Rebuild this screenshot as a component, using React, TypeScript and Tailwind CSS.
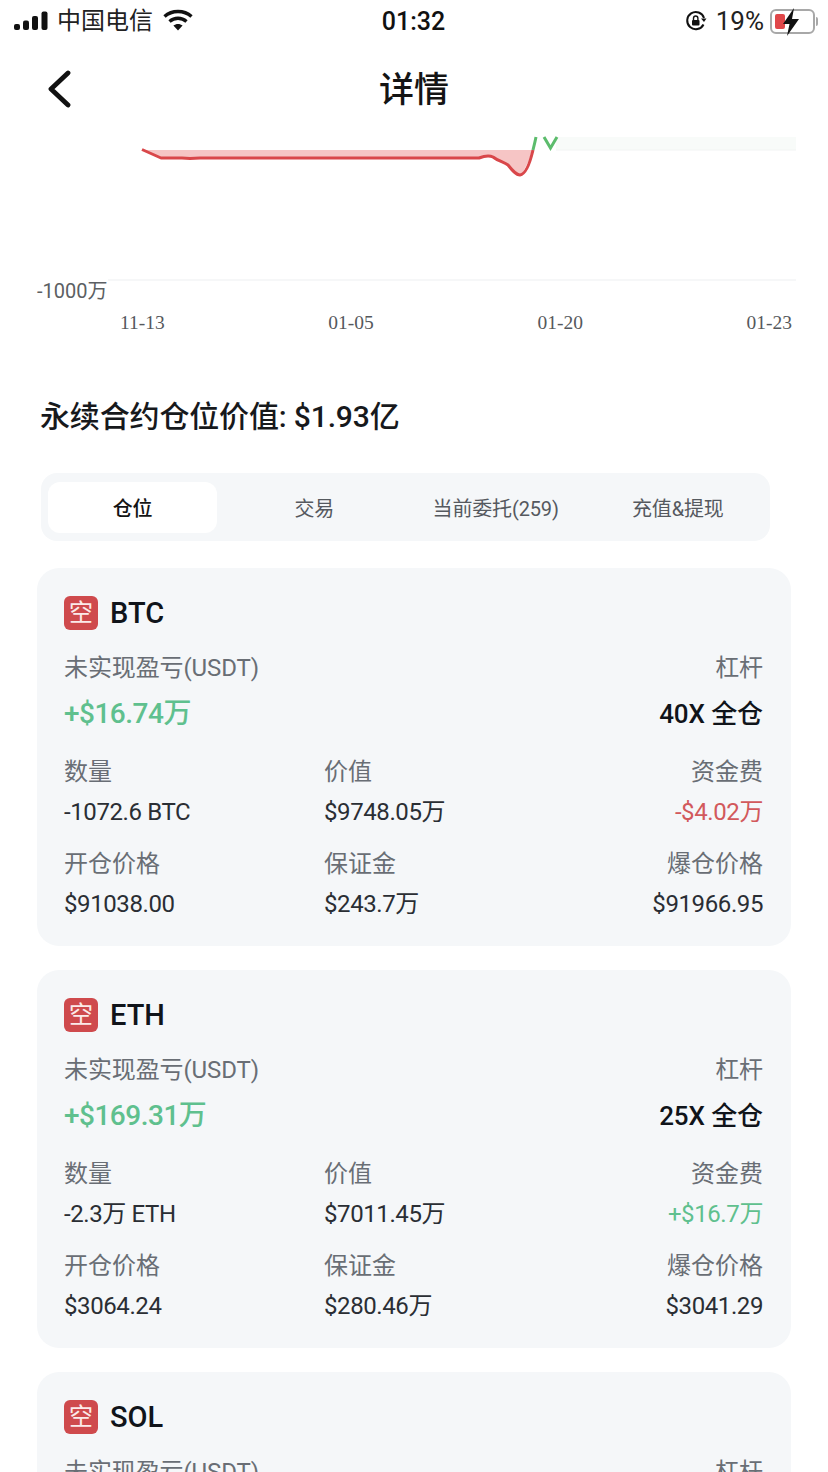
const sans = "font-['Roboto','Noto_Sans_CJK_SC',sans-serif]";

type Cell = { label: string; value: string; tone?: string };
type Position = {
  symbol: string;
  pnl: string;
  leverage: string;
  rows: Cell[][];
};

const positions: Position[] = [
  {
    symbol: 'BTC',
    pnl: '+$16.74万',
    leverage: '40X 全仓',
    rows: [
      [
        { label: '数量', value: '-1072.6 BTC' },
        { label: '价值', value: '$9748.05万' },
        { label: '资金费', value: '-$4.02万', tone: 'text-[#d2595c]' },
      ],
      [
        { label: '开仓价格', value: '$91038.00' },
        { label: '保证金', value: '$243.7万' },
        { label: '爆仓价格', value: '$91966.95' },
      ],
    ],
  },
  {
    symbol: 'ETH',
    pnl: '+$169.31万',
    leverage: '25X 全仓',
    rows: [
      [
        { label: '数量', value: '-2.3万 ETH' },
        { label: '价值', value: '$7011.45万' },
        { label: '资金费', value: '+$16.7万', tone: 'text-[#5fc08e]' },
      ],
      [
        { label: '开仓价格', value: '$3064.24' },
        { label: '保证金', value: '$280.46万' },
        { label: '爆仓价格', value: '$3041.29' },
      ],
    ],
  },
];

function StatusBar() {
  return (
    <div className="flex h-[42px] items-center justify-between pl-[14px] pr-[10px]">
      <div className="flex w-[300px] items-center">
        <svg width="34" height="20" viewBox="0 0 34 20" fill="#111">
          <rect x="0" y="13" width="6" height="6" rx="2" />
          <rect x="9" y="9.5" width="6" height="9.5" rx="2" />
          <rect x="18" y="5" width="6" height="14" rx="2" />
          <rect x="27.5" y="0.5" width="6" height="18.5" rx="2" />
        </svg>
        <span className="ml-[9px] text-[24px] leading-none text-[#222]">中国电信</span>
        <svg className="ml-[10px] -mt-[3px]" width="30" height="22" viewBox="0 0 30 22" fill="none" stroke="#111" strokeWidth="3.4">
          <path d="M1.5 7.5C9 .8 21 .8 28.5 7.5" />
          <path d="M6.5 12.5C11.5 8.2 18.5 8.2 23.5 12.5" />
          <path d="M15 21.5l-4.6-5c2.6-2.1 6.6-2.1 9.2 0z" fill="#111" stroke="none" />
        </svg>
      </div>
      <span className="-ml-[5px] text-[25px] font-medium leading-none text-[#111]">01:32</span>
      <div className="flex w-[300px] items-center justify-end">
        <svg width="22" height="22" viewBox="0 0 22 22" fill="none" stroke="#111" strokeWidth="2">
          <path d="M18.5 14.5A8.6 8.6 0 1 1 19 8" />
          <path d="M16 8.5h5.5L19 12z" fill="#111" stroke="none" />
          <rect x="7" y="10" width="7.5" height="5.5" rx="1" fill="#111" stroke="none" />
          <path d="M8.500 10V8.200a2.200 2.200 0 0 1 4.400 0V10" strokeWidth="1.400" />
        </svg>
        <span className="ml-[9px] text-[26px] leading-none text-[#222]">19%</span>
        <div className="relative ml-[6px] h-[25px] w-[45px] rounded-[6px] border-2 border-[#a8a8a8] p-[3px]">
          <div className="h-full w-[10px] rounded-[2px] bg-[#e0474a]" />
          <svg className="absolute left-[9px] -top-[5px]" width="20" height="32" viewBox="0 0 20 30" fill="#111">
            <path d="M13 1L2 17h6.500L6 29 18 12h-7z" />
          </svg>
        </div>
        <div className="ml-[1px] h-[9px] w-[2px] rounded-r bg-[#a8a8a8]" />
      </div>
    </div>
  );
}

function NavBar() {
  return (
    <div className="relative flex h-[93px] items-center justify-center pt-[3px]">
      <svg className="absolute left-[47px] top-[28px]" width="26" height="38" viewBox="0 0 26 38" fill="none" stroke="#111" strokeWidth="4.800" strokeLinecap="round" strokeLinejoin="round">
        <path d="M21 3L4 19l17 16" />
      </svg>
      <span className="text-[35px] font-medium leading-none text-[#141414]">详情</span>
    </div>
  );
}

function Chart() {
  return (
    <div className="relative h-[148px]">
      <svg className="block" width="828" height="148" viewBox="0 135 828 148" fill="none">
        <rect x="556" y="137" width="240" height="13" fill="#f8fbf9" />
        <path d="M142 150H532L529 160L522 174L517 174L511 167L505 163L498 160L491 156L484 157L479 158H190L182 158H162Z" fill="#f6c5c5" />
        <path d="M142 149.500L161 158H182L190 158.500L200 158H479C484 156 489 155 493 157C498 161 504 162 508 165C512 170 516 175 520 175C526 174 530 163 533 150" stroke="#d9474a" strokeWidth="3" strokeLinejoin="round" />
        <path d="M533 150C534 146 535 142 536 137M544 137L550.500 148L557 137" stroke="#5cbc6c" strokeWidth="3" />
        <path d="M556 150H796" stroke="#f2f4f3" strokeWidth="1" />
        <path d="M108 280H796" stroke="#f6f7f8" strokeWidth="2" />
      </svg>
      <span className={`${sans} absolute left-[37px] top-[146px] text-[20px] leading-none text-[#5c5f63]`}>-1000万</span>
    </div>
  );
}

function XAxis() {
  return (
    <div className="mt-[30px] ml-[120px] flex h-[20px] w-[672px] justify-between font-['Liberation_Serif',serif] text-[19.5px] leading-[20px] text-[#55585c]">
      <span>11-13</span>
      <span>01-05</span>
      <span>01-20</span>
      <span>01-23</span>
    </div>
  );
}

function Tabs() {
  return (
    <div className="ml-[41px] mt-[36px] grid h-[68px] w-[729px] grid-cols-4 items-center rounded-[16px] bg-[#f5f7f9] text-[20px] tracking-[-0.15px] text-[#55595f]">
      <div className="ml-[7px] flex h-[51px] w-[169px] items-center justify-center rounded-[12px] bg-white pt-[4px] font-medium text-[#141414]">仓位</div>
      <div className="pt-[4px] text-center">交易</div>
      <div className="pt-[4px] pr-[2px] text-center">当前委托(259)</div>
      <div className="pt-[4px] pr-[2px] text-center">充值&amp;提现</div>
    </div>
  );
}

function Badge() {
  return (
    <div className="flex h-[34px] w-[34px] items-center justify-center rounded-[6px] bg-[#cf4a4d] text-[24px] leading-none text-[#fbeaea]">空</div>
  );
}

function CardHead({ symbol }: { symbol: string }) {
  return (
    <>
      <div className="flex h-[36px] items-center">
        <Badge />
        <span className="ml-[12px] text-[29px] font-medium leading-none text-[#10141a]">{symbol}</span>
      </div>
      <div className="mt-[23px] flex justify-between text-[24px] leading-[28px] tracking-[-0.1px] text-[#696e75]">
        <span>未实现盈亏(USDT)</span>
        <span>杠杆</span>
      </div>
    </>
  );
}

function PositionCard({ item }: { item: Position }) {
  return (
    <div className="h-[378px] rounded-[22px] bg-[#f5f7f9] pl-[27px] pr-[28px] pt-[27px]">
      <CardHead symbol={item.symbol} />
      <div className="mt-[15px] flex h-[34px] items-center justify-between">
        <span className="text-[28px] font-medium leading-none tracking-[-0.5px] text-[#5fc08e]">{item.pnl}</span>
        <span className="text-[26px] font-medium leading-none tracking-[-0.1px] text-[#10141a]">{item.leverage}</span>
      </div>
      {item.rows.map((row, i) => (
        <div key={i} className={`${i === 0 ? 'mt-[27px]' : 'mt-[24px]'} grid grid-cols-[260px_1fr_auto]`}>
          {row.map((cell, j) => (
            <div key={cell.label} className={j === 2 ? 'text-right' : ''}>
              <div className="text-[24px] leading-[28px] text-[#696e75]">{cell.label}</div>
              <div className={`mt-[12px] text-[24px] leading-[28px] tracking-[-0.4px] ${cell.tone ?? 'text-[#2a2e34]'}`}>{cell.value}</div>
            </div>
          ))}
        </div>
      ))}
    </div>
  );
}

export default function App() {
  return (
    <div className={`${sans} h-[1472px] w-[828px] overflow-hidden bg-white`}>
      <StatusBar />
      <NavBar />
      <Chart />
      <XAxis />
      <h2 className="ml-[40px] mt-[64px] h-[40px] text-[30px] font-medium leading-[40px] tracking-[-0.15px] text-[#17191c]">永续合约仓位价值: $1.93亿</h2>
      <Tabs />
      <div className="mx-[37px] mt-[27px] flex flex-col gap-[24px]">
        {positions.map((p) => (
          <PositionCard key={p.symbol} item={p} />
        ))}
        <div className="h-[200px] rounded-[22px] bg-[#f5f7f9] pl-[27px] pr-[28px] pt-[27px]">
          <CardHead symbol="SOL" />
        </div>
      </div>
    </div>
  );
}
